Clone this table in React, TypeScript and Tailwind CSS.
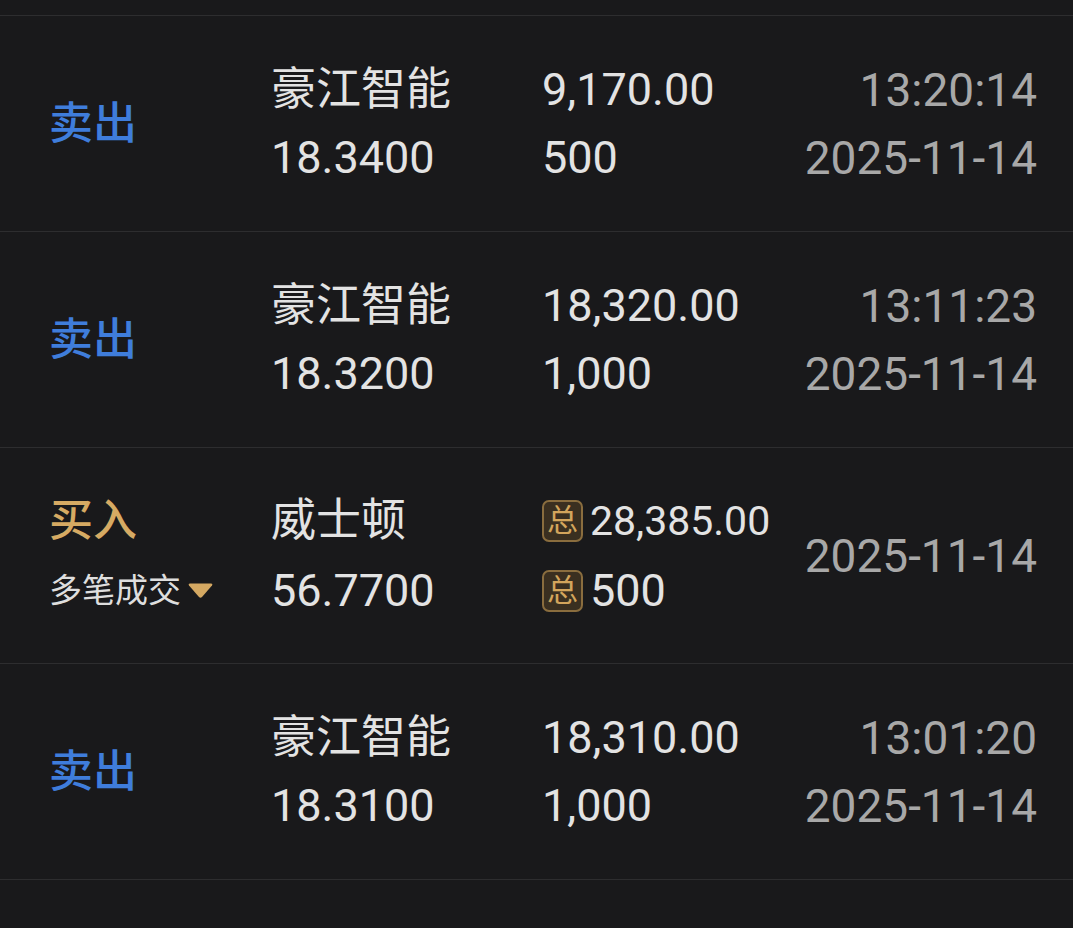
const FONT = { fontFamily: 'Roboto, "Noto Sans CJK SC", sans-serif' };

type Trade = {
  side: "sell" | "buy";
  name: string;
  price: string;
  amount: string;
  qty: string;
  time?: string;
  date: string;
  multi?: boolean;
};

const trades: Trade[] = [
  { side: "sell", name: "豪江智能", price: "18.3400", amount: "9,170.00", qty: "500", time: "13:20:14", date: "2025-11-14" },
  { side: "sell", name: "豪江智能", price: "18.3200", amount: "18,320.00", qty: "1,000", time: "13:11:23", date: "2025-11-14" },
  { side: "buy", name: "威士顿", price: "56.7700", amount: "28,385.00", qty: "500", date: "2025-11-14", multi: true },
  { side: "sell", name: "豪江智能", price: "18.3100", amount: "18,310.00", qty: "1,000", time: "13:01:20", date: "2025-11-14" },
];

function TotalBadge() {
  return (
    <span className="mr-[7px] inline-flex h-[42px] w-[41px] items-center justify-center rounded-[7px] border-2 border-[#8a6d3e] bg-[#3a2f20] text-[31px] leading-none text-[#d3a55c]">
      总
    </span>
  );
}

function Row({ t }: { t: Trade }) {
  const lh = t.multi ? "leading-[70px]" : "leading-[68px]";
  return (
    <div className="flex h-[216px] items-center border-b border-[#2d2d2f]">
      <div className="w-[271px] pl-[49px]">
        {t.multi ? (
          <div className="leading-[70px]">
            <div className="text-[44px] font-medium text-[#d6aa63]">买入</div>
            <div className="flex items-center text-[33px] text-[#dedede]">
              多笔成交
              <svg width="27" height="17" viewBox="0 0 27 17" className="ml-[6px]">
                <path d="M3 1.5 H24 Q26 1.5 25 3.5 L15 15 Q13.5 16.5 12 15 L2 3.5 Q1 1.5 3 1.5 Z" fill="#d4a862" />
              </svg>
            </div>
          </div>
        ) : (
          <div className="text-[44px] font-medium text-[#3f7ddb]">卖出</div>
        )}
      </div>
      <div className={`w-[271px] text-[45px] text-[#e3e3e3] ${lh}`}>
        <div>{t.name}</div>
        <div>{t.price}</div>
      </div>
      <div className={`flex-1 text-[#e3e3e3] ${lh}`}>
        {t.multi ? (
          <>
            <div className="flex items-center text-[41px]">
              <TotalBadge />
              {t.amount}
            </div>
            <div className="flex items-center text-[45px]">
              <TotalBadge />
              {t.qty}
            </div>
          </>
        ) : (
          <>
            <div className="text-[45px]">{t.amount}</div>
            <div className="text-[45px]">{t.qty}</div>
          </>
        )}
      </div>
      <div className="pr-[36px] text-right text-[46px] leading-[68px] text-[#a8a8a8]">
        {t.time && <div>{t.time}</div>}
        <div>{t.date}</div>
      </div>
    </div>
  );
}

export default function App() {
  return (
    <div style={FONT} className="h-[928px] w-full overflow-hidden bg-[#19191b]">
      <div className="h-[16px] border-b border-[#2d2d2f]" />
      {trades.map((t, i) => (
        <Row key={i} t={t} />
      ))}
    </div>
  );
}
